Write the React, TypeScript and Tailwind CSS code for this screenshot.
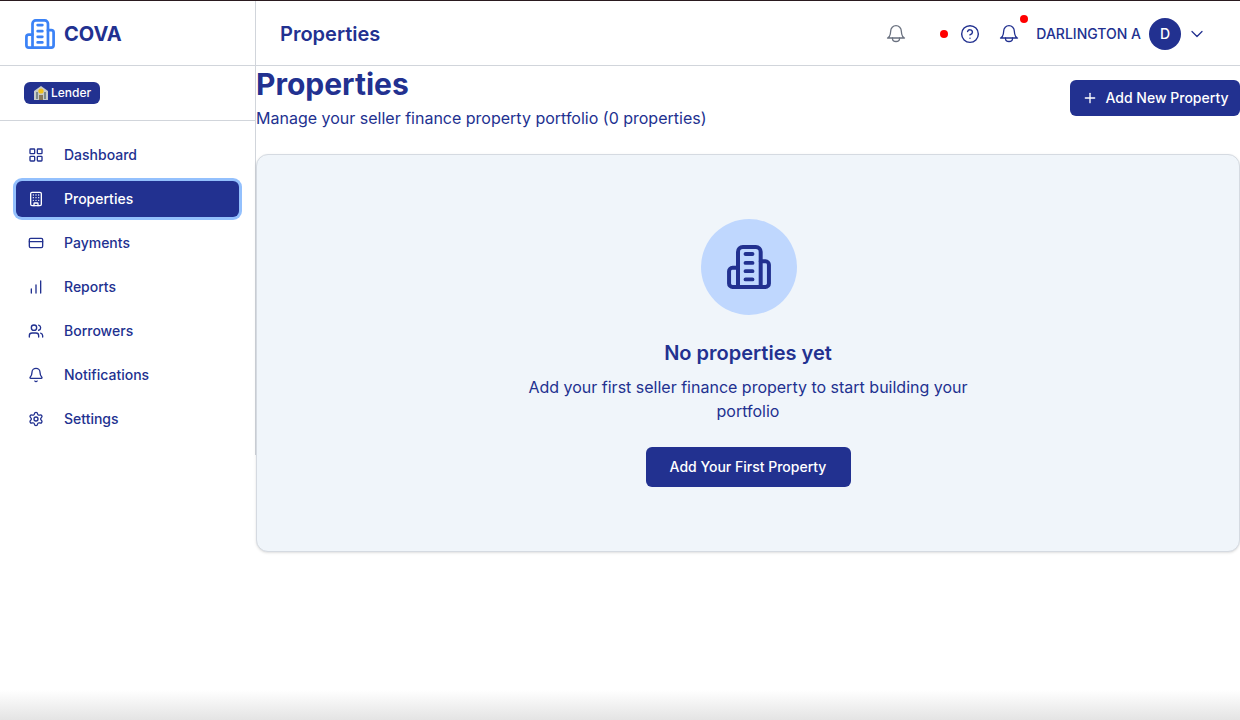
import { Building, ChartNoAxesColumnIncreasing, Bell, ChevronDown, CircleHelp, CreditCard, LayoutGrid, Plus, Settings, Users } from "lucide-react";

const NAV_LINKS = [
  { label: "Dashboard", icon: LayoutGrid },
  { label: "Properties", icon: Building, active: true },
  { label: "Payments", icon: CreditCard },
  { label: "Reports", icon: ChartNoAxesColumnIncreasing },
  { label: "Borrowers", icon: Users },
  { label: "Notifications", icon: Bell },
  { label: "Settings", icon: Settings },
];

function TowerIcon({ className }: { className?: string }) {
  return (
    <svg viewBox="0 0 32 32" fill="none" stroke="currentColor" strokeWidth="2.900" strokeLinecap="round" strokeLinejoin="round" className={className}>
      <path d="M8 30.500V5a3.500 3.500 0 0 1 3.500-3.500h9.500a3.500 3.500 0 0 1 3.500 3.500v25.500" />
      <path d="M8 16.600H4a2.500 2.500 0 0 0-2.500 2.500v8.900a2.500 2.500 0 0 0 2.500 2.500h24a2.500 2.500 0 0 0 2.500-2.500V14.400a2.500 2.500 0 0 0-2.500-2.500h-3.500" />
      <path d="M13.500 6.500h5M13.500 13h5M13.500 19h5M13.500 25h5" />
    </svg>
  );
}

function HeaderBell({ className }: { className?: string }) {
  return (
    <svg viewBox="0 0 20 20" fill="none" stroke="currentColor" strokeWidth="1.300" strokeLinecap="round" strokeLinejoin="round" className={className}>
      <path d="M1.500 14c1.500-.6 2.500-2 2.800-4l.4-3a5.300 5.300 0 0 1 10.600 0l.4 3c.3 2 1.300 3.400 2.800 4H1.500Z" />
      <path d="M6.500 14v.8c0 1.700 1.500 2.700 3.500 2.700s3.500-1 3.500-2.700V14" />
    </svg>
  );
}

function BankEmoji() {
  return (
    <svg viewBox="0 0 16 16" className="w-[16px] h-[16px] shrink-0">
      <path d="M1 6 8 1l7 5v9H1Z" fill="#c9ccc9" />
      <path d="M3 7h2v7H3ZM11 7h2v7h-2Z" fill="#7d8a8c" />
      <path d="M6 10h4v5H6Z" fill="#8a7a5a" />
      <circle cx="8" cy="6" r="2.600" fill="#f2c21a" />
    </svg>
  );
}

function Sidebar() {
  return (
    <aside className="w-[256px] shrink-0 self-start border-r border-[#d1d5db] h-[454px]">
      <div className="h-[65px] flex items-center gap-[9px] pl-[25px] pt-px border-b border-[#d1d5db]">
        <TowerIcon className="w-[30px] h-[30px] text-[#3b82f6]" />
        <span className="text-[20px] font-bold text-[#223190]">COVA</span>
      </div>
      <div className="h-[55px] pt-[16px] pl-[24px] flex items-start border-b border-[#d1d5db]">
        <span className="flex items-center h-[22px] w-[76px] pl-[9px] gap-[2px] rounded-md bg-[#223190] text-white text-[12px] font-medium">
          <BankEmoji />
          Lender
        </span>
      </div>
      <nav className="flex flex-col gap-2 px-4 pt-4">
        {NAV_LINKS.map((link) => {
          const Icon = link.icon;
          return (
            <a
              key={link.label}
              className={
                link.active
                  ? "h-[36px] flex items-center gap-5 px-3 rounded-md text-sm font-medium bg-[#223190] text-white ring-[3px] ring-[#93c0fd]"
                  : "h-[36px] flex items-center gap-5 px-3 rounded-md text-sm font-medium text-[#223190]"
              }
            >
              <Icon size={16} strokeWidth={2} />
              {link.label}
            </a>
          );
        })}
      </nav>
    </aside>
  );
}

function TopBar() {
  return (
    <header className="h-[65px] flex items-center justify-between pl-[25px] pr-[33px] pt-px border-b border-[#d1d5db] shrink-0">
      <h2 className="text-[20px] font-semibold text-[#223190]">Properties</h2>
      <div className="flex items-center">
        <HeaderBell className="w-[20px] h-[20px] text-[#6b7280]" />
        <span className="ml-[34px] w-2 h-2 rounded-full bg-[#ff0000]" />
        <CircleHelp size={20} strokeWidth={1.700} className="ml-[12px] text-[#223190]" />
        <div className="relative ml-[19px]">
          <HeaderBell className="w-[20px] h-[20px] text-[#223190]" />
          <span className="absolute -top-[9px] left-[21px] w-2 h-2 rounded-full bg-[#ff0000]" />
        </div>
        <span className="ml-[17px] text-sm font-medium text-[#223190]">DARLINGTON A</span>
        <span className="ml-2 w-[32px] h-[32px] rounded-full bg-[#223190] text-white text-sm font-medium flex items-center justify-center">D</span>
        <ChevronDown size={20} strokeWidth={1.500} className="ml-[6px] text-[#223190]" />
      </div>
    </header>
  );
}

export default function App() {
  return (
    <div className="h-[720px] flex flex-col bg-white overflow-hidden font-['Inter',sans-serif]">
      <div className="h-px bg-[#2a1a1f] shrink-0" />
      <div className="flex flex-1 min-h-0">
        <Sidebar />
        <div className="flex-1 min-w-0 -ml-px flex flex-col">
          <TopBar />
          <main className="pl-px">
            <div className="flex items-start justify-between">
              <div>
                <h1 className="text-[30px] leading-[36px] font-bold text-[#223190]">Properties</h1>
                <p className="mt-[4px] text-base text-[#223190]">Manage your seller finance property portfolio (0 properties)</p>
              </div>
              <button className="mt-[14px] h-[36px] w-[170px] flex items-center justify-center gap-2 rounded-md bg-[#223190] text-white text-sm font-medium">
                <Plus size={16} />
                Add New Property
              </button>
            </div>
            <section className="mt-[24px] h-[398px] rounded-xl border border-[#d5dae1] bg-[#f0f5fa] shadow-sm flex flex-col items-center pt-[64px]">
              <div className="ml-[2px] w-[96px] h-[96px] rounded-full bg-[#bfd7fe] flex items-center justify-center">
                <TowerIcon className="w-[44px] h-[44px] text-[#223190]" />
              </div>
              <h3 className="mt-[24px] text-[20px] leading-[28px] font-semibold text-[#223190]">No properties yet</h3>
              <p className="mt-[8px] w-[448px] text-center text-base text-[#223190]">
                Add your first seller finance property to start building your portfolio
              </p>
              <button className="mt-[24px] h-[40px] w-[205px] rounded-md bg-[#223190] text-white text-sm font-medium">
                Add Your First Property
              </button>
            </section>
          </main>
        </div>
      </div>
      <div className="h-[30px] shrink-0 bg-gradient-to-b from-white to-[#e4e4e4]" />
    </div>
  );
}
